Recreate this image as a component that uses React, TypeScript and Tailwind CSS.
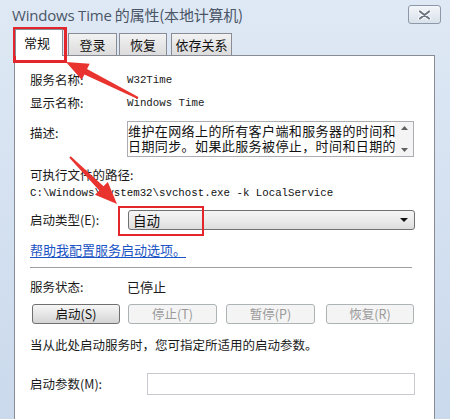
import React from "react";

const cjk = "font-['Noto_Sans_CJK_SC',sans-serif]";
const mono = "font-['Liberation_Mono',monospace]";

function Btn({ label, enabled, w, ml }: { label: string; enabled?: boolean; w: string; ml: string }) {
  return (
    <div
      className={`${w} ${ml} h-[20px] flex items-center justify-center rounded-[3px] border text-[12.5px] leading-none ${
        enabled
          ? "border-[#707070] bg-gradient-to-b from-[#f6f6f6] via-[#e6e6e6] to-[#d4d4d4] text-[#111]"
          : "border-[#adb2b5] bg-[#f4f4f4] text-[#9a9a9a]"
      }`}
    >
      {label}
    </div>
  );
}

export default function App() {
  return (
    <div className={`relative w-[450px] h-[419px] overflow-hidden bg-gradient-to-b from-[#dfe9f5] to-[#cad9ec] ${cjk}`}>
      {/* title bar */}
      <div className="flex h-[29px] items-center justify-between pl-[12px] pr-[9px]">
        <span className="text-[15px] leading-none text-[#4a5666] tracking-[-0.2px]">
          <span className="font-['Open_Sans',sans-serif]">Windows Time</span> 的属性(本地计算机)
        </span>
        <div className="flex h-[19px] w-[33px] items-center justify-center rounded-[3px] border border-[#8d99a8] bg-gradient-to-b from-[#f3f6fa] to-[#d9e1ea]">
          <svg width="13" height="10" viewBox="0 0 13 10">
            <path d="M2 1.5 L11 8.5 M11 1.5 L2 8.5" stroke="#ffffff" strokeWidth="4" strokeLinecap="round" />
            <path d="M2 1.5 L11 8.5 M11 1.5 L2 8.5" stroke="#6d7682" strokeWidth="2.2" strokeLinecap="round" />
          </svg>
        </div>
      </div>

      {/* tabs */}
      <div className="flex h-[26px] items-end pl-[15px]">
        <div className="relative z-10 -mb-px flex h-[27px] w-[48px] items-center border border-b-0 border-[#898c95] bg-white pl-[8px] text-[13px] text-[#111]">
          常规
        </div>
        <div className="ml-[5px] flex h-[22px] w-[49px] items-center justify-center border border-b-0 border-[#898c95] bg-gradient-to-b from-[#f2f2f2] to-[#dcdcdc] text-[13px] text-[#111]">
          登录
        </div>
        <div className="ml-[2px] flex h-[22px] w-[48px] items-center justify-center border border-b-0 border-[#898c95] bg-gradient-to-b from-[#f2f2f2] to-[#dcdcdc] text-[13px] text-[#111]">
          恢复
        </div>
        <div className="ml-[4px] flex h-[22px] w-[61px] items-center justify-center border border-b-0 border-[#898c95] bg-gradient-to-b from-[#f2f2f2] to-[#dcdcdc] text-[13px] text-[#111]">
          依存关系
        </div>
      </div>

      {/* panel */}
      <div className="ml-[14px] h-[380px] w-[421px] border border-[#898c95] bg-white pl-[15px] text-[12.5px] text-[#1a1a1a]">
        <div className="mt-[14px] flex h-[20px] items-center">
          <div className="w-[97px]">服务名称:</div>
          <div className={`${mono} text-[10.75px]`}>W32Time</div>
        </div>
        <div className="mt-[3px] flex h-[20px] items-center">
          <div className="w-[97px]">显示名称:</div>
          <div className={`${mono} text-[10.75px]`}>Windows Time</div>
        </div>
        <div className="mt-[8px] flex items-start">
          <div className="mt-[2px] w-[97px] leading-[20px]">描述:</div>
          <div className="flex h-[36px] w-[287px] border border-[#abadb3] bg-white">
            <div className="min-w-0 flex-1 overflow-hidden pt-[1px] text-[13px] leading-[15px] text-[#111] tracking-[0.4px]">
              <div className="whitespace-nowrap">维护在网络上的所有客户端和服务器的时间和</div>
              <div className="whitespace-nowrap">日期同步。如果此服务被停止，时间和日期的</div>
            </div>
            <div className="flex w-[18px] shrink-0 flex-col items-center justify-between bg-[#f4f4f4] py-[4px]">
              <svg width="7" height="4" viewBox="0 0 7 4"><path d="M0 4 L3.5 0 L7 4 Z" fill="#606060" /></svg>
              <svg width="7" height="4" viewBox="0 0 7 4"><path d="M0 0 L3.5 4 L7 0 Z" fill="#606060" /></svg>
            </div>
          </div>
        </div>
        <div className="mt-[10px] flex h-[16px] items-center">可执行文件的路径:</div>
        <div className={`mt-[2px] flex h-[16px] items-center ${mono} text-[10.75px] text-[#111]`}>
          C:\Windows\system32\svchost.exe -k LocalService
        </div>
        <div className="mt-[9px] flex h-[20px] items-center">
          <div className="w-[98px]">启动类型(E):</div>
          <div className="flex h-[20px] w-[287px] items-center justify-between rounded-[3px] border border-[#707070] bg-gradient-to-b from-[#f5f5f5] via-[#ebebeb] to-[#dddddd] pl-[4px] pr-[6px] text-[13.5px] text-[#111]">
            <span>自动</span>
            <svg width="8" height="4" viewBox="0 0 8 4"><path d="M0 0 L8 0 L4 4 Z" fill="#111" /></svg>
          </div>
        </div>
        <div className="mt-[12px] flex h-[16px] items-center">
          <span className="text-[13px] text-[#1a54c4] underline decoration-[#1a54c4] underline-offset-[2px]">帮助我配置服务启动选项。</span>
        </div>
        <div className="mt-[9px] h-px w-[382px] bg-[#a0a0a0]" />
        <div className="mt-[11px] flex h-[16px] items-center">
          <div className="w-[97px]">服务状态:</div>
          <div className="text-[13px]">已停止</div>
        </div>
        <div className="mt-[9px] flex">
          <Btn label="启动(S)" enabled w="w-[88px]" ml="ml-[2px]" />
          <Btn label="停止(T)" w="w-[89px]" ml="ml-[8px]" />
          <Btn label="暂停(P)" w="w-[89px]" ml="ml-[9px]" />
          <Btn label="恢复(R)" w="w-[88px]" ml="ml-[11px]" />
        </div>
        <div className="mt-[13px] flex h-[16px] items-center">当从此处启动服务时，您可指定所适用的启动参数。</div>
        <div className="mt-[20px] flex items-center">
          <div className="w-[117px]">启动参数(M):</div>
          <div className="h-[22px] w-[268px] border border-[#c8cacf] bg-white" />
        </div>
      </div>

      {/* annotations */}
      <div className="absolute left-[13px] top-[27px] h-[36px] w-[54px] border-[3px] border-[#e3262b]" />
      <div className="absolute left-[118px] top-[206px] h-[30px] w-[86px] border-[2px] border-[#e3262b]" />
      <svg className="absolute left-0 top-0" width="450" height="419" viewBox="0 0 450 419">
        <polygon
          points="66,62 89.7,63.8 87.0,69.1 138.4,97.1 137.6,98.9 84.4,74.5 81.7,79.8"
          fill="#e8332f"
        />
        <polygon
          points="117,204 95.0,194.8 99.3,190.5 69.3,157.7 70.7,156.3 103.5,186.3 107.8,182.0"
          fill="#e8332f"
        />
      </svg>
    </div>
  );
}
